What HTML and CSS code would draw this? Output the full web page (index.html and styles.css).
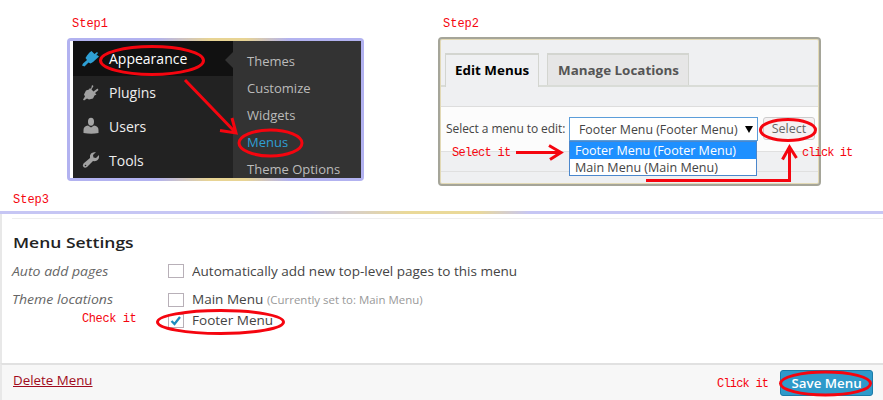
FILE: index.html
```html
<!DOCTYPE html>
<html lang="en">
<head>
<meta charset="utf-8">
<title>Menu setup steps</title>
<link rel="stylesheet" href="styles.css">
</head>
<body>
<main class="guide">
  <div class="top">
    <section class="step step-one">
      <h2 class="note">Step1</h2>
      <div class="admin-frame">
        <div class="admin">
          <ul class="nav">
            <li class="active"><svg class="icon" width="18" height="18" viewBox="0 0 18 18"><path fill="#2e9fd4" d="M7.500 2.500L9.500 1l3 3 2.500-2 1 1-2 2.500 1-.5 2 1.500-6 5.500-6-6.500zM5 5.500l6 6.500-2.500 1.500-2-1-4 4L0 15.500l1-2 4-3.500-1.500-2z"/></svg><span>Appearance</span></li>
            <li><svg class="icon" width="18" height="18" viewBox="0 0 18 18"><path fill="#a2a2a2" d="M10 2l1.500 1-2 3.500 2 2 4-3 1 1.500-3.500 3 1.500 1.500-2 1-1.500 3-4 1-2-1-3 2-1-1 2-3-1-2 2-4 3-1 1-1.500 1 1z"/></svg><span>Plugins</span></li>
            <li><svg class="icon" width="18" height="18" viewBox="0 0 18 18"><ellipse cx="9" cy="4.700" rx="3" ry="4" fill="#a5a5a5"/><path fill="#a2a2a2" d="M1.500 16v-3q0-4 4.500-4.500l3 2 3-2q4.500.5 4.500 4.500v3q-7 1.500-15 0z"/></svg><span>Users</span></li>
            <li><svg class="icon" width="18" height="18" viewBox="0 0 18 18"><path fill="#a2a2a2" d="M14 1l-3 3 .5 2.500 2.500.5 3-3q.5 4-2 5.500-2 1-4 .5l-6 6q-2 1.500-3.500 0t0-3.500l6.500-5.500Q7 1 14 1z"/><circle cx="3.500" cy="14.500" r=".8" fill="#222"/></svg><span>Tools</span></li>
          </ul>
          <ul class="submenu">
            <li>Themes</li><li>Customize</li><li>Widgets</li><li class="current">Menus</li><li>Theme Options</li>
          </ul>
        </div>
      </div>
    </section>
    <section class="step step-two">
      <h2 class="note">Step2</h2>
      <div class="editor">
        <div class="tabs">
          <div class="tab selected"><span>Edit Menus</span></div>
          <div class="tab"><span>Manage Locations</span></div>
        </div>
        <div class="chooser">
          <span class="prompt">Select a menu to edit:</span>
          <div class="select"><span>Footer Menu (Footer Menu)</span><i class="caret"></i>
            <div class="options"><div class="option chosen"><span>Footer Menu (Footer Menu)</span></div><div class="option"><span>Main Menu (Main Menu)</span></div></div>
          </div>
          <button class="pick" type="button">Select</button>
        </div>
        <div class="strip"></div>
      </div>
    </section>
  </div>
  <section class="step-three">
    <h2 class="note">Step3</h2>
    <div class="settings">
      <h3><span>Menu Settings</span></h3>
      <div class="row auto"><em><span>Auto add pages</span></em><i class="box"></i><span class="label">Automatically add new top-level pages to this menu</span></div>
      <div class="row"><em><span>Theme locations</span></em><i class="box"></i><span class="label main-label">Main Menu</span><span class="hint">(Currently set to: Main Menu)</span></div>
      <div class="row footer-row"><em></em><i class="box"><svg width="16" height="14" viewBox="0 0 16 14"><path d="M3.500 7l3 3 5.500-7" fill="none" stroke="#1e8cbe" stroke-width="2.300"/></svg></i><span class="label">Footer Menu</span></div>
    </div>
    <div class="actions"><a class="delete">Delete Menu</a><button class="save" type="button"><span>Save Menu</span></button></div>
  </section>
  <svg class="marks" width="883" height="400" viewBox="0 0 883 400" fill="none" stroke="#f5050f" stroke-width="3">
    <ellipse cx="152" cy="60.500" rx="51.500" ry="14"/>
    <path d="M185 80L236 133M232 118L236 133L220 130.500"/>
    <ellipse cx="270.500" cy="143" rx="31.500" ry="13"/>
    <path d="M516 152.500H560M549 145.500L561 152.500L550 159.500"/>
    <ellipse cx="788" cy="130" rx="27.500" ry="10.500"/>
    <path d="M646 180.500H789.500V147M782.500 159.500L789.500 147L796.500 158"/>
    <ellipse cx="220.500" cy="322" rx="63" ry="11.500"/>
    <ellipse cx="825.500" cy="383.500" rx="45" ry="11.500"/>
  </svg>
  <span class="note mark-label select-note">Select it</span>
  <span class="note mark-label click-note">click it</span>
  <span class="note mark-label check-note">Check it</span>
  <span class="note mark-label save-note">Click it</span>
</main>
</body>
</html>
```
FILE: styles.css
```css
* { box-sizing: border-box; }
body { margin: 0; background: #fff; }
ul, h2, h3 { margin: 0; padding: 0; list-style: none; }
.guide { position: relative; width: 883px; height: 400px; overflow: hidden; font-family: "Open Sans", "Noto Sans", sans-serif; color: #444; }
.guide span { white-space: nowrap; }
.top { display: flex; height: 192px; }
.note { font: 12px/14px "Liberation Mono", monospace; color: #f5050f; }
.step { padding-top: 16px; }
.step-one { width: 438px; padding-left: 67px; }
.step-one .note { padding-left: 5px; }
.step-two .note { padding-left: 5px; }
.step .note, .step-three .note { position: relative; top: 1px; }
.admin-frame { width: 297px; height: 143px; margin-top: 8px; padding: 3px 3px 3px 6px; border-radius: 4px; background: linear-gradient(#fff, #fff) 3px 3px / 3px 137px no-repeat, linear-gradient(90deg, #b2b2f0 30%, #e8d494 48%, #e8d494 60%, #b2b2f0 75%); }
.admin { display: flex; height: 137px; background: #222; }
.nav { width: 160px; color: #eee; font-size: 14px; }
.nav li { display: flex; align-items: center; gap: 9px; height: 34px; padding: 0 0 2px 9px; }
.nav .active { height: 35px; padding-bottom: 0; background: #111; color: #fff; position: relative; }
.nav .active::after { content: ""; position: absolute; right: 0; top: 11px; border: 8px solid transparent; border-left: 0; border-right-color: #333; }
.submenu { width: 128px; padding: 7px 0 0 14px; background: #333; color: #bbb; font-size: 13px; line-height: 27px; white-space: nowrap; overflow: hidden; }
.submenu .current { color: #2e9fd4; }
.editor { width: 383px; height: 149px; margin-top: 7px; border: 2px solid #a5a599; border-radius: 4px; background: #eff0f2; box-shadow: inset 0 0 0 1px #e2d9b5; }
.tabs { display: flex; gap: 8px; height: 48px; padding: 14px 0 0 4px; margin: 0 1px; border-bottom: 2px solid #d9dcd7; }
.tab { height: 32px; border: 1px solid #d3d5d0; border-top-width: 2px; border-bottom: 0; background: #e6e6e6; font-weight: 700; font-size: 13px; line-height: 31px; color: #555; width: 142px; padding-left: 10px; }
.tab span, .select span, .row span, .row em span, h3 span, .save span { display: inline-block; transform-origin: 0 50%; }
.tab span { transform: scaleX(1.03); }
.tab.selected { width: 94px; height: 34px; background: #eff0f2; color: #000; padding-left: 9px; }
.chooser { display: flex; height: 45px; margin: 19px 1px 0; padding: 10px 0 0 5px; border-top: 1px solid #ddd; background: #fcfcfc; font-size: 13px; }
.prompt { width: 123px; font-size: 12px; line-height: 23px; letter-spacing: -.07px; }
.select { position: relative; display: flex; align-items: center; width: 189px; height: 24px; padding: 0 0 0 9px; border: 1px solid #5b9dd9; background: #fff; }
.select > span { width: 167px; transform: scaleX(.95); }
.caret { flex: none; border: 4px solid transparent; border-top: 7px solid #000; border-bottom: 0; margin-left: -1px; }
.options { position: absolute; z-index: 1; left: -1px; top: 23px; width: 188px; height: 35px; border: 1px solid #4b87cc; background: #fff; }
.option { height: 17px; padding-left: 5px; line-height: 17px; }
.option span { transform: scaleX(.965); }
.option.chosen { background: #1e90ff; color: #fff; }
.pick { width: 52px; height: 23px; margin-left: 5px; padding: 0; border: 1px solid #ccc; border-radius: 3px; background: #f5f1f2; color: #666; font: 12.500px "Open Sans", sans-serif; }
.strip { height: 21px; margin: 0 1px; background: #eff0f2; border: solid #e0e0e0; border-width: 1px 0; }
.step-three .note { padding-left: 13px; height: 19px; }
.settings { height: 152px; padding: 3px 0 0 12px; border-top: 3px solid; border-image: linear-gradient(90deg, #c6c6f4 34%, #ead999 46%, #ead999 54%, #c6c6f4 60%) 1; background: linear-gradient(#e8e8e8, #e8e8e8) 0 0 / 2px 100% no-repeat, linear-gradient(#eee, #eee) 12px 4px / 871px 1px no-repeat; }
h3 { height: 40px; font-size: 15px; line-height: 50px; font-weight: 600; color: #222; }
h3 span { transform: translateX(1px) scaleX(1.165); }
.row { display: flex; align-items: center; height: 21px; font-size: 12px; color: #444; }
.row.auto { height: 28px; margin-bottom: 4px; }
.row em { width: 156px; font-size: 12px; color: #666; }
.row em span { transform: scaleX(1.17); }
.row .label { transform: scaleX(1.128); }
.row .main-label { width: 71px; }
.box { width: 16px; height: 14px; margin-right: 8px; border: 1px solid #b8b0b8; background: #fff; }
.box svg { display: block; margin: -1px; }
.row .hint { margin-left: 4px; font-size: 11px; color: #999; transform: scaleX(1.04); }
.actions { display: flex; justify-content: space-between; align-items: flex-start; height: 37px; padding: 5px 10px 0 11px; border-top: 2px solid #e1e1e1; border-left: 2px solid #e8e8e8; background: #f7f7f7; }
.delete { font-size: 12px; line-height: 22px; color: #a00a20; text-decoration: underline; transform: scaleX(1.11); transform-origin: 0 50%; }
.save { width: 93px; height: 26px; padding: 0; border: 1px solid #1b7ba8; border-radius: 3px; background: #2e9aca; color: #fff; font: 600 12px "Open Sans", sans-serif; }
.save span { transform: scaleX(1.11); transform-origin: 50% 50%; }
.marks { position: absolute; left: 0; top: 0; }
.mark-label { position: absolute; }
.select-note { left: 452px; top: 146px; letter-spacing: -.7px; }
.click-note { left: 802px; top: 146px; letter-spacing: -.9px; }
.check-note { left: 82px; top: 312px; letter-spacing: -.4px; }
.save-note { left: 717px; top: 377px; letter-spacing: -.8px; }
```
